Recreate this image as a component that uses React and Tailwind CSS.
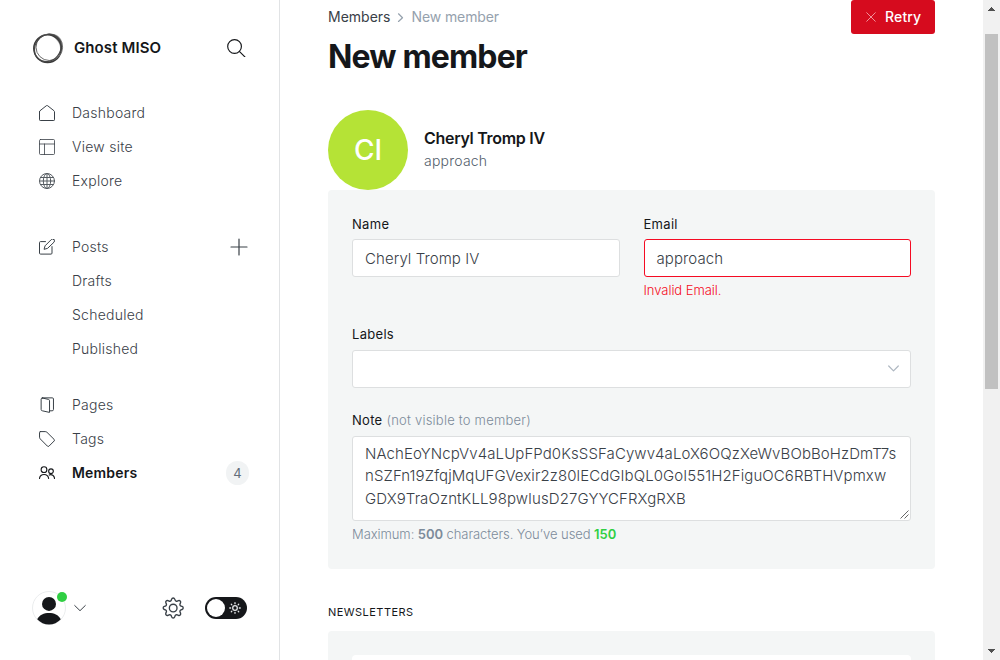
import React from "react";

function Icon({ children, size = 16, className = "", box = "0 0 24 24", w = 1.5 }) {
  return (
    <svg
      width={size}
      height={size}
      viewBox={box}
      fill="none"
      stroke="currentColor"
      strokeWidth={w}
      strokeLinecap="round"
      strokeLinejoin="round"
      className={"block shrink-0 " + className}
    >
      {children}
    </svg>
  );
}

const icons = {
  home: <path d="M.75 10.200v12a1.050 1.050 0 0 0 1.050 1.050h20.400a1.050 1.050 0 0 0 1.050-1.050v-12a2 2 0 0 0-.8-1.600L13 1.100a1.600 1.600 0 0 0-2 0L1.550 8.600a2 2 0 0 0-.8 1.600Z" />,
  layout: <path opacity=".8" d="M2.250.75h19.500a1.500 1.500 0 0 1 1.500 1.500v19.500a1.500 1.500 0 0 1-1.500 1.500H2.250a1.500 1.500 0 0 1-1.500-1.500V2.250a1.500 1.500 0 0 1 1.500-1.500ZM.75 7.500h22.500M8.250 7.500v15.750" />,
  globe: (
    <g opacity=".85">
      <circle cx="12" cy="12" r="11.250" />
      <ellipse cx="12" cy="12" rx="5.500" ry="11.250" />
      <path d="M.75 12h22.500M2.300 6.750h19.400M2.300 17.250h19.400M12 .75v22.500" />
    </g>
  ),
  posts: (
    <>
      <path d="M22.200 1.800a2.900 2.900 0 0 0-4.100 0L8.800 11.100 7.300 16.400l5.300-1.500 9.600-9.200a2.800 2.800 0 0 0 0-3.900Z" transform="translate(.3 -.9)" />
      <path d="M19.500 12v9.750a1.500 1.500 0 0 1-1.500 1.500H2.250a1.500 1.500 0 0 1-1.500-1.500V6a1.500 1.500 0 0 1 1.500-1.500h7.500" transform="translate(0 -.6)" />
    </>
  ),
  pages: (
    <>
      <path d="M5 1.500l9.200 2.100a2 2 0 0 1 1.600 2v17.500L5 20.700a2 2 0 0 1-1.800-2V3.200A1.700 1.700 0 0 1 5 1.500Z" />
      <path d="M5 1.300h15a1.700 1.700 0 0 1 1.700 1.700v15.700a2 2 0 0 1-2 2h-3.900" />
    </>
  ),
  tags: <path d="M2 .9h7.300a4 4 0 0 1 2.700 1.100l10.700 10.600a1.700 1.700 0 0 1 0 2.400L15 22.700a1.700 1.700 0 0 1-2.400 0L2 12a4 4 0 0 1-1.200-2.700V2A1.100 1.100 0 0 1 2 .9Z" />,
  members: (
    <>
      <circle cx="7.500" cy="7" r="4.300" />
      <path d="M.75 20.300a6.900 6.900 0 0 1 13.700 0" />
      <circle cx="18" cy="9.300" r="3.500" />
      <path d="M15.300 15.100a5.600 5.600 0 0 1 7.950 5.100" />
    </>
  ),
};

function NavItem({ icon, label, active, children }) {
  return (
    <li className={"flex h-[34px] items-center pr-[31px] pl-[39px] text-sm " + (active ? "font-semibold text-[#15171a]" : "font-[350] text-[#394047]")}>
      <span className="w-[33px] shrink-0">{icon && <Icon w={icon === "members" ? 1.700 : 1.500}>{icons[icon]}</Icon>}</span>
      <span className={"grow " + (active ? "tracking-[0.18px]" : "tracking-[0.25px]")}>{label}</span>
      {children}
    </li>
  );
}

function Sidebar() {
  return (
    <aside className="flex w-[280px] shrink-0 flex-col border-r border-[#e1e3e5]">
      <div className="flex h-24 items-center pr-[33.500px] pl-8">
        <svg width="32" height="32" viewBox="0 0 32 32" fill="none" className="block">
          <path d="M15 1.800c8-1.600 14.500 3 15.400 9.300.5 4.500-.3 8-3.400 12 1.800-6 1.400-10.500-1.800-14.300C22.500 5.200 19 3.300 15 1.800Z" fill="#9a9a9a" />
          <circle cx="15.600" cy="16.600" r="13.800" stroke="#3a3a3a" strokeWidth="1.500" />
          <ellipse cx="17.300" cy="15.200" rx="13.300" ry="13.300" stroke="#6c6c6c" strokeWidth="1" />
          <ellipse cx="15.800" cy="16" rx="14.300" ry="12.600" transform="rotate(-50 15.800 16)" stroke="#444" strokeWidth="1.200" />
        </svg>
        <span className="ml-[10px] grow text-[15px] font-semibold tracking-[0.1px] text-[#15171a]">Ghost MISO</span>
        <Icon size={18.500} className="text-[#15171a]" w={1.500}>
          <circle cx="9.800" cy="9.800" r="8.900" />
          <path d="m16 16 7.250 7.250" />
        </Icon>
      </div>
      <ul>
        <NavItem icon="home" label="Dashboard" />
        <NavItem icon="layout" label="View site" />
        <NavItem icon="globe" label="Explore" />
      </ul>
      <ul className="mt-8">
        <NavItem icon="posts" label="Posts">
          <Icon size={18} box="0 0 18 18" w={1.200}>
            <path d="M9 1v16M1 9h16" />
          </Icon>
        </NavItem>
        <NavItem label="Drafts" />
        <NavItem label="Scheduled" />
        <NavItem label="Published" />
      </ul>
      <ul className="mt-[22px]">
        <NavItem icon="pages" label="Pages" />
        <NavItem icon="tags" label="Tags" />
        <NavItem icon="members" label="Members" active>
          <span className="-mr-px flex h-6 w-[23px] items-center justify-center rounded-full bg-[#f1f3f4] text-[13px] font-normal text-[#626d79]">4</span>
        </NavItem>
      </ul>
      <div className="mt-auto mb-[35px] flex h-[34px] items-center pl-8">
        <div className="relative">
          <svg width="34" height="34" viewBox="0 0 34 34" className="block">
            <circle cx="17" cy="17" r="16.500" fill="#fff" stroke="#e5e7e9" strokeWidth=".8" />
            <circle cx="17" cy="12.900" r="7" fill="#15171a" />
            <path d="M5.200 28.300C7.500 23.700 12 21.900 17 21.900s9.500 1.800 11.800 6.400a16 16 0 0 1-23.600 0Z" fill="#15171a" />
          </svg>
          <span className="absolute top-px left-[25px] size-2.5 rounded-full bg-[#30cf43]" />
        </div>
        <Icon size={12} box="0 0 12 12" w={1} className="ml-2 text-[#394047]">
          <path d="m.7 3.500 5.300 5.200 5.300-5.200" />
        </Icon>
        <Icon size={22} box="0 0 24 24" w={1.600} className="ml-[76px] text-[#394047]">
          <g transform="translate(1.050 .25) scale(.93)">
            <path d="M10.550 2.660l-.46 1.260a1.900 1.900 0 0 1-2.550 1.130l-1.260-.56a1.920 1.920 0 0 0-2.540 2.540l.56 1.260a1.900 1.900 0 0 1-1.100 2.550l-1.280.46a1.900 1.900 0 0 0 0 3.600l1.280.46a1.900 1.900 0 0 1 1.100 2.550l-.56 1.260a1.920 1.920 0 0 0 2.540 2.540l1.260-.56a1.900 1.900 0 0 1 2.550 1.130l.46 1.260a1.900 1.900 0 0 0 3.600 0l.46-1.260a1.900 1.900 0 0 1 2.550-1.130l1.260.56a1.920 1.920 0 0 0 2.540-2.540l-.56-1.260a1.900 1.900 0 0 1 1.100-2.550l1.280-.46a1.900 1.900 0 0 0 0-3.600l-1.280-.46a1.900 1.900 0 0 1-1.100-2.550l.56-1.260a1.920 1.920 0 0 0-2.540-2.540l-1.260.56a1.900 1.900 0 0 1-2.550-1.130l-.46-1.260a1.900 1.900 0 0 0-3.600 0Z" transform="translate(-.35 -.5)" />
            <circle cx="12" cy="12.700" r="4.500" />
          </g>
        </Icon>
        <div className="ml-[21px] flex h-[22px] w-[42px] items-center justify-between rounded-full bg-[#15171a] pr-1.5 pl-0.5">
          <span className="size-[18px] rounded-full bg-white" />
          <Icon size={12} box="0 0 13 13" w={1.400} className="text-[#e4e6e8]">
            <circle cx="6.500" cy="6.500" r="2.500" />
            <path d="M6.500 .8v1M6.500 11.200v1M.8 6.500h1M11.200 6.500h1M2.500 2.500l.6.6M9.900 9.900l.6.6M2.500 10.500l.6-.6M9.900 3.100l.6-.6" />
          </Icon>
        </div>
      </div>
    </aside>
  );
}

const noteLines = [
  "NAchEoYNcpVv4aLUpFPd0KsSSFaCywv4aLoX6OQzXeWvBObBoHzDmT7s",
  "nSZFn19ZfqjMqUFGVexir2z80lECdGIbQL0GoI551H2FiguOC6RBTHVpmxw",
  "GDX9TraOzntKLL98pwIusD27GYYCFRXgRXB",
];

function Label({ children }) {
  return <div className="h-5 text-[13px] leading-5 font-normal tracking-[0.3px] text-[#15171a]">{children}</div>;
}

function MemberForm() {
  return (
    <section className="h-[379px] shrink-0 rounded bg-[#f4f6f6] px-6 pt-6">
      <div className="grid h-[110px] grid-cols-2 gap-x-6">
        <div>
          <Label>Name</Label>
          <div className="mt-[5px] flex h-[38px] items-center rounded-[3px] border border-[#dddfe0] bg-white px-3 pt-0.5 text-[15px] font-[350] tracking-[0.08px] text-[#394047]">Cheryl Tromp IV</div>
        </div>
        <div>
          <Label>Email</Label>
          <div className="mt-[5px] flex h-[38px] items-center rounded-[3px] border border-[#f50b23] bg-white px-3 pt-0.5 text-[15px] font-[350] tracking-[0.1px] text-[#394047]">approach</div>
          <p className="mt-[3px] text-[13px] leading-5 font-[350] tracking-[-0.05px] text-[#f50b23]">Invalid Email.</p>
        </div>
      </div>
      <Label>Labels</Label>
      <div className="mt-1.5 flex h-[38px] items-center justify-end rounded-[3px] border border-[#dddfe0] bg-white pr-[11px] pb-px">
        <Icon size={11} box="0 0 11 11" w={1.200} className="text-[#aeb7c1]">
          <path d="m.7 3 4.800 4.900L10.300 3" />
        </Icon>
      </div>
      <div className="mt-[22px]">
        <Label>
          Note <span className="font-[350] tracking-[0.22px] text-[#7c8b9a]">(not visible to member)</span>
        </Label>
      </div>
      <div className="relative mt-1.5 h-[85px] rounded-[3px] border border-[#dddfe0] bg-white px-3 pt-[5.6px] text-[15px] leading-[22.5px] font-[350] tracking-[0.09px] text-[#394047]">
        {noteLines.map((line) => (
          <div key={line} className="whitespace-nowrap">{line}</div>
        ))}
        <svg width="9" height="9" viewBox="0 0 9 9" className="absolute right-px bottom-px" stroke="#555" strokeWidth=".9">
          <path d="M.5 8.500l8-8M4.500 8.500l4-4" />
        </svg>
      </div>
      <p className="mt-[3px] text-[13px] leading-5 font-[350] tracking-[-0.07px] text-[#7c8b9a]">
        Maximum: <b className="font-semibold">500</b> characters. You’ve used <b className="font-semibold text-[#30cf43]">150</b>
      </p>
    </section>
  );
}

function Main() {
  return (
    <main className="flex w-[703px] shrink-0 flex-col overflow-hidden pr-12 pl-12">
      <header className="flex h-[110px] shrink-0 justify-between">
        <div>
          <div className="mt-[7px] flex h-5 items-center text-sm">
            <span className="text-[#394047]">Members</span>
            <Icon size={9} box="0 0 9 9" w={1.200} className="mx-[6px] text-[#95a1ad]">
              <path d="m2.500.8 4 3.900-4 3.800" />
            </Icon>
            <span className="tracking-[-0.1px] text-[#95a1ad]">New member</span>
          </div>
          <h1 className="mt-[9px] text-[32px] leading-[42px] font-bold tracking-[-0.85px] text-[#15171a]">New member</h1>
        </div>
        <button className="flex h-[34px] w-[84px] items-center rounded-[3px] bg-[#d60b1e] pl-[15px] text-sm font-medium tracking-[0.15px] text-white">
          <Icon size={10} box="0 0 10 10" w={1} className="mr-[9px] text-[#f2909a]">
            <path d="m.7.7 8.600 8.600M9.300.7.7 9.300" />
          </Icon>
          Retry
        </button>
      </header>
      <div className="flex h-20 shrink-0 items-center">
        <div className="flex size-20 items-center justify-center rounded-full bg-[#b5e336] text-[28px] font-medium text-white">CI</div>
        <div className="mb-1 ml-4">
          <h3 className="text-base leading-6 font-semibold tracking-[-0.3px] text-[#15171a]">Cheryl Tromp IV</h3>
          <p className="text-sm leading-[21px] font-[350] tracking-[0.22px] text-[#54606b]">approach</p>
        </div>
      </div>
      <MemberForm />
      <h4 className="mt-[34px] text-[11px] leading-[18px] font-normal tracking-[0.45px] text-[#15171a]">NEWSLETTERS</h4>
      <section className="mt-2.5 h-20 shrink-0 rounded bg-[#f4f6f6] px-6 pt-6">
        <div className="h-20 rounded bg-white" />
      </section>
    </main>
  );
}

function Scrollbar() {
  return (
    <div className="flex w-[17px] shrink-0 flex-col items-center bg-[#f1f1f1]">
      <svg width="17" height="34" viewBox="0 0 17 34" className="block" shapeRendering="crispEdges">
        <path d="M5 11h7L8.500 7Z" fill="#505050" />
      </svg>
      <div className="h-[355px] w-[13px] bg-[#c1c1c1]" />
      <svg width="17" height="17" viewBox="0 0 17 17" className="mt-auto block" shapeRendering="crispEdges">
        <path d="M5 6h7l-3.500 4Z" fill="#505050" />
      </svg>
    </div>
  );
}

export default function App() {
  return (
    <div className="flex h-[660px] w-[1000px] overflow-hidden bg-white font-['Inter',sans-serif]">
      <Sidebar />
      <Main />
      <Scrollbar />
    </div>
  );
}
